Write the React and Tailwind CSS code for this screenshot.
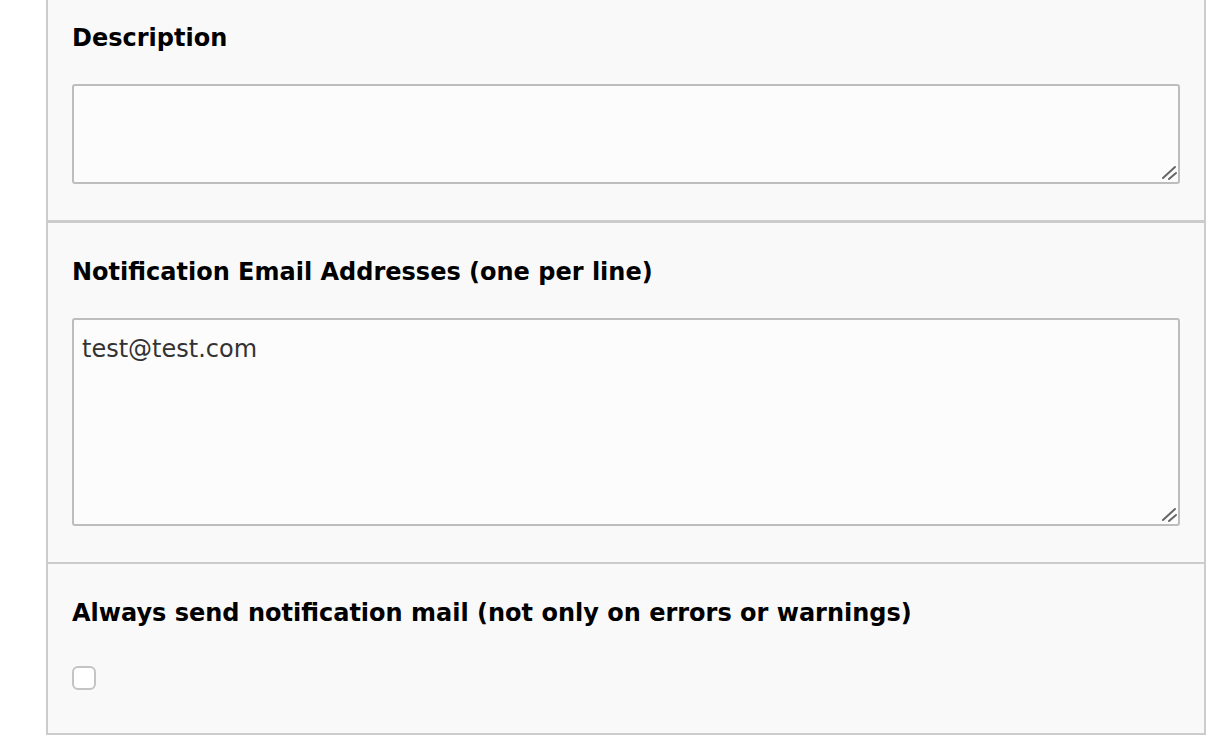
import React from "react";

const font = { fontFamily: '"DejaVu Sans", Verdana, sans-serif' };

function Label({ children }) {
  return (
    <div className="text-[24px] leading-[28px] font-bold text-black" style={font}>
      {children}
    </div>
  );
}

function Grip() {
  return (
    <svg
      className="absolute right-0 bottom-0 pointer-events-none"
      width="20"
      height="20"
      viewBox="0 0 20 20"
    >
      <line x1="3" y1="14" x2="15" y2="3" stroke="#666" strokeWidth="2" strokeLinecap="round" />
      <line x1="9" y1="15" x2="16" y2="9" stroke="#666" strokeWidth="2" strokeLinecap="round" />
    </svg>
  );
}

export default function App() {
  return (
    <div className="min-h-[746px] bg-white pl-[46px] pr-[18px]" style={font}>
      <div className="bg-[#f9f9f9] border-x-2 border-b-2 border-[#cccccc]">
        <div className="px-6 pt-[24px] pb-[36px] border-b-[3px] border-[#cccccc]">
          <Label>Description</Label>
          <div className="relative mt-[32px]">
            <textarea
              className="block w-full h-[100px] resize-none bg-[#fcfcfc] border-2 border-[#bdbdbd] rounded-[3px] px-2 py-2 text-[24px] text-[#333] outline-none"
              style={font}
              defaultValue=""
            />
            <Grip />
          </div>
        </div>
        <div className="px-6 pt-[35px] pb-[36px] border-b-2 border-[#cccccc]">
          <Label>Notification Email Addresses (one per line)</Label>
          <div className="relative mt-[32px]">
            <textarea
              className="block w-full h-[208px] resize-none bg-[#fcfcfc] border-2 border-[#bdbdbd] rounded-[3px] px-2 py-[14px] text-[24px] leading-[30px] text-[#333] outline-none"
              style={font}
              defaultValue="test@test.com"
            />
            <Grip />
          </div>
        </div>
        <div className="px-6 pt-[35px] pb-[43px]">
          <Label>Always send notification mail (not only on errors or warnings)</Label>
          <input
            type="checkbox"
            className="mt-[39px] block appearance-none w-6 h-6 bg-white border-2 border-[#c4c4c4] rounded-[6px]"
          />
        </div>
      </div>
    </div>
  );
}
